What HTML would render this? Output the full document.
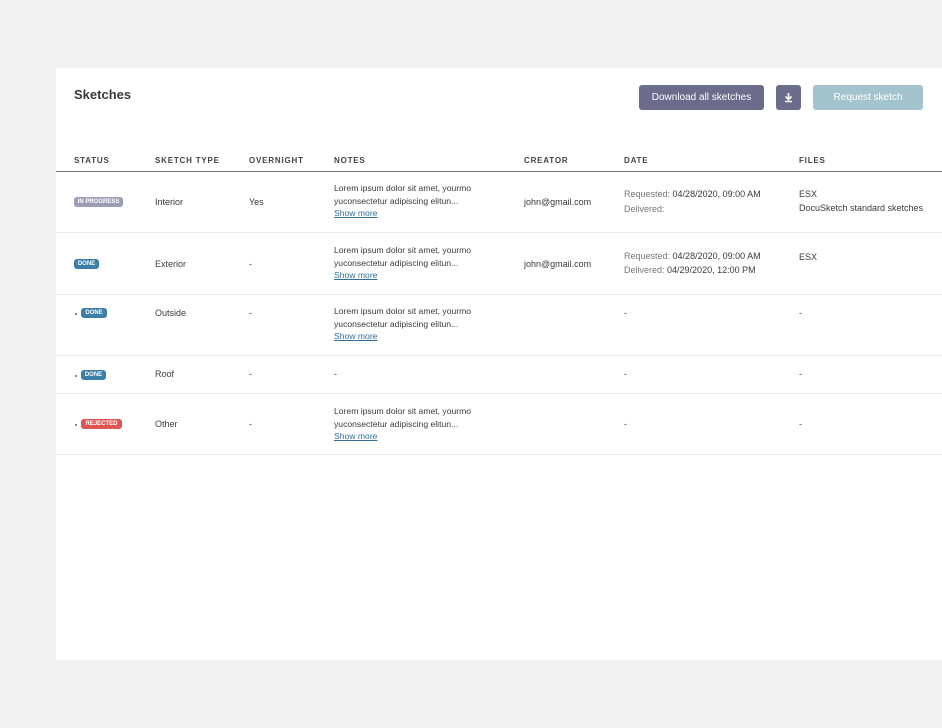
<!DOCTYPE html>
<html><head><meta charset="utf-8"><style>
*{margin:0;padding:0;box-sizing:border-box}
body{width:942px;height:728px;background:#f2f2f2;font-family:"Liberation Sans",sans-serif;color:#3a3a3a;position:relative;overflow:hidden}
.card{position:absolute;left:56px;top:68px;width:886px;height:592px;background:#fff}
.a{position:absolute;white-space:nowrap;font-size:9px}
h1{position:absolute;left:74px;top:87px;font-size:13px;font-weight:bold;color:#3a3a3a}
.btn{position:absolute;top:85px;height:25px;border-radius:3px;color:#fff;font-size:10px;text-align:center;line-height:26px}
.th{position:absolute;top:156px;font-size:8px;font-weight:bold;letter-spacing:.8px;color:#444}
.hl{position:absolute;left:56px;width:886px;top:171px;height:1px;background:#777}
.rl{position:absolute;left:56px;width:886px;height:1px;background:#e8ebef}
.note{position:absolute;left:334px;font-size:8.6px;line-height:12.5px;color:#3a3a3a}
.note u{color:#2f6f9a}
.badge{position:absolute;height:10px;border-radius:3px;color:#fff;font-size:6px;font-weight:bold;line-height:10.5px;padding-top:0;text-align:center;display:flex;align-items:center;justify-content:center}
.g{color:#777}
.dot{position:absolute;left:75px;width:2px;height:2px;background:#888}
</style></head><body>
<div class="card"></div>
<h1>Sketches</h1>
<div class="btn" style="left:639px;width:125px;background:#6b6b8c">Download all sketches</div>
<div class="btn" style="left:776px;width:25px;background:#6b6b8c"><svg width="25" height="25" viewBox="0 0 25 25"><path d="M12.5 8v6M9.5 11.5l3 3 3-3M9 16.5h7" stroke="#fff" stroke-width="1.6" fill="none"/></svg></div>
<div class="btn" style="left:813px;width:110px;background:#a3c3cd">Request sketch</div>

<div class="th" style="left:74px">STATUS</div>
<div class="th" style="left:155px">SKETCH TYPE</div>
<div class="th" style="left:249px">OVERNIGHT</div>
<div class="th" style="left:334px">NOTES</div>
<div class="th" style="left:524px">CREATOR</div>
<div class="th" style="left:624px">DATE</div>
<div class="th" style="left:799px">FILES</div>
<div class="hl"></div>

<div class="badge" style="left:74px;top:197px;width:49px;background:#9c9cb4">IN PROGRESS</div>
<div class="a" style="left:155px;top:197px">Interior</div>
<div class="a" style="left:249px;top:197px">Yes</div>
<div class="note" style="top:182px">Lorem ipsum dolor sit amet, yourmo<br>yuconsectetur adipiscing elitun...<br><u>Show more</u></div>
<div class="a" style="left:524px;top:197px">john@gmail.com</div>
<div class="a" style="left:624px;top:189px"><span class="g">Requested:</span> 04/28/2020, 09:00 AM</div>
<div class="a g" style="left:624px;top:204px">Delivered:</div>
<div class="a" style="left:799px;top:189px">ESX</div>
<div class="a" style="left:799px;top:203px">DocuSketch standard sketches</div>
<div class="rl" style="top:232px"></div>

<div class="badge" style="left:74px;top:259px;width:25px;background:#3b7ea8">DONE</div>
<div class="a" style="left:155px;top:259px">Exterior</div>
<div class="a" style="left:249px;top:259px">-</div>
<div class="note" style="top:244px">Lorem ipsum dolor sit amet, yourmo<br>yuconsectetur adipiscing elitun...<br><u>Show more</u></div>
<div class="a" style="left:524px;top:259px">john@gmail.com</div>
<div class="a" style="left:624px;top:251px"><span class="g">Requested:</span> 04/28/2020, 09:00 AM</div>
<div class="a" style="left:624px;top:265px"><span class="g">Delivered:</span> 04/29/2020, 12:00 PM</div>
<div class="a" style="left:799px;top:252px">ESX</div>
<div class="rl" style="top:294px"></div>

<div class="dot" style="top:313px"></div>
<div class="badge" style="left:81px;top:308px;width:26px;background:#3b7ea8">DONE</div>
<div class="a" style="left:155px;top:308px">Outside</div>
<div class="a" style="left:249px;top:308px">-</div>
<div class="note" style="top:305px">Lorem ipsum dolor sit amet, yourmo<br>yuconsectetur adipiscing elitun...<br><u>Show more</u></div>
<div class="a" style="left:624px;top:308px">-</div>
<div class="a" style="left:799px;top:308px">-</div>
<div class="rl" style="top:355px"></div>

<div class="dot" style="top:375px"></div>
<div class="badge" style="left:81px;top:370px;width:25px;background:#3b7ea8">DONE</div>
<div class="a" style="left:155px;top:369px">Roof</div>
<div class="a" style="left:249px;top:369px">-</div>
<div class="a" style="left:334px;top:369px">-</div>
<div class="a" style="left:624px;top:369px">-</div>
<div class="a" style="left:799px;top:369px">-</div>
<div class="rl" style="top:393px"></div>

<div class="dot" style="top:424px"></div>
<div class="badge" style="left:81px;top:419px;width:41px;background:#e05454">REJECTED</div>
<div class="a" style="left:155px;top:419px">Other</div>
<div class="a" style="left:249px;top:419px">-</div>
<div class="note" style="top:405px">Lorem ipsum dolor sit amet, yourmo<br>yuconsectetur adipiscing elitun...<br><u>Show more</u></div>
<div class="a" style="left:624px;top:419px">-</div>
<div class="a" style="left:799px;top:419px">-</div>
<div class="rl" style="top:454px"></div>
</body></html>
